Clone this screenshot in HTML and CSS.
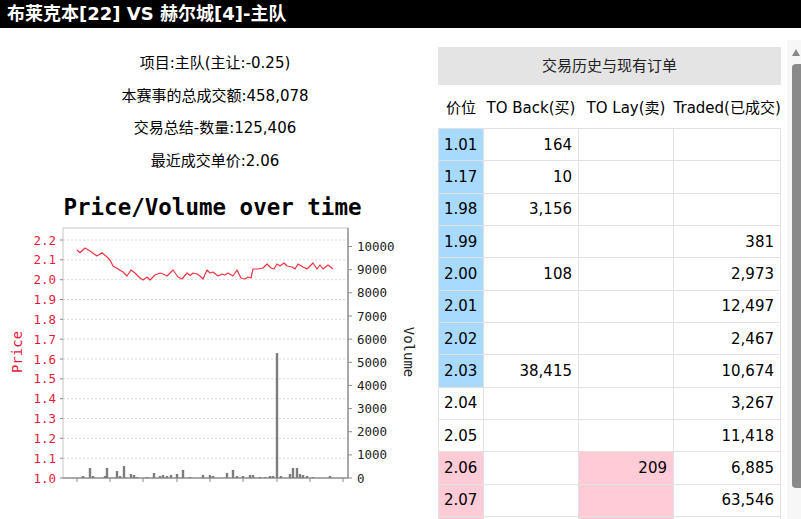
FILE: index.html
```html
<!DOCTYPE html>
<html lang="zh">
<head>
  <meta charset="UTF-8" />
  <title>布莱克本[22] VS 赫尔城[4]-主队</title>
  <link rel="stylesheet" href="styles.css">
</head>
<body>
  <div class="topbar">布莱克本[22] VS 赫尔城[4]-主队</div>
  <div class="main">
    <div class="summary">
      <p>项目:主队(主让:-0.25)</p>
      <p>本赛事的总成交额:458,078</p>
      <p>交易总结-数量:125,406</p>
      <p>最近成交单价:2.06</p>

      <svg class="chart" width="425" height="310" viewBox="0 185 425 310">
        <text class="chart-title" x="212.5" y="215" text-anchor="middle">Price/Volume over time</text>

        <!-- grid -->
        <g class="grid">
          <line x1="63" x2="348" y1="240" y2="240"/>
          <line x1="63" x2="348" y1="259.8" y2="259.8"/>
          <line x1="63" x2="348" y1="279.7" y2="279.7"/>
          <line x1="63" x2="348" y1="299.5" y2="299.5"/>
          <line x1="63" x2="348" y1="319.3" y2="319.3"/>
          <line x1="63" x2="348" y1="339.2" y2="339.2"/>
          <line x1="63" x2="348" y1="359" y2="359"/>
          <line x1="63" x2="348" y1="378.8" y2="378.8"/>
          <line x1="63" x2="348" y1="398.7" y2="398.7"/>
          <line x1="63" x2="348" y1="418.5" y2="418.5"/>
          <line x1="63" x2="348" y1="438.3" y2="438.3"/>
          <line x1="63" x2="348" y1="458.2" y2="458.2"/>
        </g>

        <!-- frame -->
        <line class="frame-light" x1="63" x2="348" y1="228" y2="228"/>
        <line class="frame-light" x1="63" x2="63" y1="228" y2="478"/>
        <line class="frame" x1="348" x2="348" y1="228" y2="478"/>
        <line class="frame" x1="63" x2="348" y1="478" y2="478"/>

        <!-- ticks -->
        <g class="ticks">
          <line x1="60" x2="63" y1="240" y2="240"/>
          <line x1="60" x2="63" y1="259.8" y2="259.8"/>
          <line x1="60" x2="63" y1="279.7" y2="279.7"/>
          <line x1="60" x2="63" y1="299.5" y2="299.5"/>
          <line x1="60" x2="63" y1="319.3" y2="319.3"/>
          <line x1="60" x2="63" y1="339.2" y2="339.2"/>
          <line x1="60" x2="63" y1="359" y2="359"/>
          <line x1="60" x2="63" y1="378.8" y2="378.8"/>
          <line x1="60" x2="63" y1="398.7" y2="398.7"/>
          <line x1="60" x2="63" y1="418.5" y2="418.5"/>
          <line x1="60" x2="63" y1="438.3" y2="438.3"/>
          <line x1="60" x2="63" y1="458.2" y2="458.2"/>
          <line x1="60" x2="63" y1="478" y2="478"/>

          <line x1="348" x2="352" y1="246.5" y2="246.5"/>
          <line x1="348" x2="352" y1="269.7" y2="269.7"/>
          <line x1="348" x2="352" y1="292.8" y2="292.8"/>
          <line x1="348" x2="352" y1="316" y2="316"/>
          <line x1="348" x2="352" y1="339.1" y2="339.1"/>
          <line x1="348" x2="352" y1="362.3" y2="362.3"/>
          <line x1="348" x2="352" y1="385.4" y2="385.4"/>
          <line x1="348" x2="352" y1="408.6" y2="408.6"/>
          <line x1="348" x2="352" y1="431.7" y2="431.7"/>
          <line x1="348" x2="352" y1="454.9" y2="454.9"/>
          <line x1="348" x2="352" y1="478" y2="478"/>

          <line x1="77" x2="77" y1="478" y2="482"/>
          <line x1="110" x2="110" y1="478" y2="482"/>
          <line x1="143" x2="143" y1="478" y2="482"/>
          <line x1="177" x2="177" y1="478" y2="482"/>
          <line x1="210" x2="210" y1="478" y2="482"/>
          <line x1="243" x2="243" y1="478" y2="482"/>
          <line x1="277" x2="277" y1="478" y2="482"/>
          <line x1="310" x2="310" y1="478" y2="482"/>
          <line x1="343" x2="343" y1="478" y2="482"/>
        </g>

        <!-- price axis -->
        <g class="price-labels" text-anchor="end">
          <text x="56" y="244.5">2.2</text>
          <text x="56" y="264.3">2.1</text>
          <text x="56" y="284.2">2.0</text>
          <text x="56" y="304">1.9</text>
          <text x="56" y="323.8">1.8</text>
          <text x="56" y="343.7">1.7</text>
          <text x="56" y="363.5">1.6</text>
          <text x="56" y="383.3">1.5</text>
          <text x="56" y="403.2">1.4</text>
          <text x="56" y="423">1.3</text>
          <text x="56" y="442.8">1.2</text>
          <text x="56" y="462.7">1.1</text>
          <text x="56" y="482.5">1.0</text>
        </g>
        <text class="axis-name price-name" transform="translate(22 352) rotate(-90)" text-anchor="middle">Price</text>

        <!-- volume axis -->
        <g class="volume-labels">
          <text x="357" y="251">10000</text>
          <text x="357" y="274.2">9000</text>
          <text x="357" y="297.3">8000</text>
          <text x="357" y="320.5">7000</text>
          <text x="357" y="343.6">6000</text>
          <text x="357" y="366.8">5000</text>
          <text x="357" y="389.9">4000</text>
          <text x="357" y="413.1">3000</text>
          <text x="357" y="436.2">2000</text>
          <text x="357" y="459.4">1000</text>
          <text x="357" y="482.5">0</text>
        </g>
        <text class="axis-name" transform="translate(404 352) rotate(90)" text-anchor="middle">Volume</text>

        <!-- volume bars -->
        <g class="bars">
          <rect x="81.8" y="476" width="2.4" height="2"/>
          <rect x="88.8" y="468" width="2.4" height="10"/>
          <rect x="91.8" y="476" width="2.4" height="2"/>
          <rect x="103.8" y="476" width="2.4" height="2"/>
          <rect x="105.8" y="468" width="2.4" height="10"/>
          <rect x="115.8" y="471" width="2.4" height="7"/>
          <rect x="118.8" y="476" width="2.4" height="2"/>
          <rect x="122.8" y="466" width="2.4" height="12"/>
          <rect x="129.8" y="474" width="2.4" height="4"/>
          <rect x="132.8" y="475" width="2.4" height="3"/>
          <rect x="135.8" y="477" width="2.4" height="1"/>
          <rect x="145.8" y="477" width="2.4" height="1"/>
          <rect x="152.8" y="473" width="2.4" height="5"/>
          <rect x="158.8" y="476" width="2.4" height="2"/>
          <rect x="161.8" y="475" width="2.4" height="3"/>
          <rect x="165.8" y="476" width="2.4" height="2"/>
          <rect x="169.8" y="475" width="2.4" height="3"/>
          <rect x="175.8" y="474" width="2.4" height="4"/>
          <rect x="181.8" y="470" width="2.4" height="8"/>
          <rect x="188.8" y="477" width="2.4" height="1"/>
          <rect x="201.8" y="475" width="2.4" height="3"/>
          <rect x="208.8" y="475" width="2.4" height="3"/>
          <rect x="211.8" y="476" width="2.4" height="2"/>
          <rect x="225.8" y="473" width="2.4" height="5"/>
          <rect x="231.8" y="470" width="2.4" height="8"/>
          <rect x="235.8" y="476" width="2.4" height="2"/>
          <rect x="241.8" y="476" width="2.4" height="2"/>
          <rect x="248.8" y="475" width="2.4" height="3"/>
          <rect x="251.8" y="475" width="2.4" height="3"/>
          <rect x="258.8" y="477" width="2.4" height="1"/>
          <rect x="263.8" y="477" width="2.4" height="1"/>
          <rect x="268.8" y="476" width="2.4" height="2"/>
          <rect x="271.8" y="476" width="2.4" height="2"/>
          <rect x="275.8" y="353" width="2.4" height="125"/>
          <rect x="279.8" y="476" width="2.4" height="2"/>
          <rect x="288.8" y="474" width="2.4" height="4"/>
          <rect x="291.8" y="468" width="2.4" height="10"/>
          <rect x="295.8" y="468" width="2.4" height="10"/>
          <rect x="298.8" y="474" width="2.4" height="4"/>
          <rect x="301.8" y="475" width="2.4" height="3"/>
          <rect x="305.8" y="476" width="2.4" height="2"/>
          <rect x="311.8" y="477" width="2.4" height="1"/>
          <rect x="328.8" y="476" width="2.4" height="2"/>
        </g>

        <!-- price line -->
        <polyline class="price-line" points="77,250 80,252.7 85,248 90,251 97,256 102,252.7 107,257 110,260 113,266 118,269 123,272 127,276 131,270 135,273 140,278 143,280 147,277 150,280 155,275 160,273 163,274 167,276 173,270 178,277 182,279 187,273 190,275.5 193,273 197,274 200,276 203,279 207,270 210,273 213,272 218,276 222,274 225,275 228,273 233,276 237,270 241,278 245,279 248,277 251,278 253,269 258,269 263,268 267,264 271,268 274,269 277,264 280,266 284,263 287,266 292,267 295,269 298,264 303,267 307,269 310,266 313,263 317,269 320,265 323,269 328,265 333,269"/>
      </svg>
    </div>

    <div class="book">
      <div class="book-body">
        <div class="book-title">交易历史与现有订单</div>
        <table class="orders">
          <thead>
            <tr>
              <th class="col-price">价位</th>
              <th class="col-back">TO Back(买)</th>
              <th class="col-lay">TO Lay(卖)</th>
              <th class="col-traded">Traded(已成交)</th>
            </tr>
          </thead>
          <tbody>
            <tr><td class="price back">1.01</td><td class="num">164</td><td class="num"></td><td class="num"></td></tr>
            <tr><td class="price back">1.17</td><td class="num">10</td><td class="num"></td><td class="num"></td></tr>
            <tr><td class="price back">1.98</td><td class="num">3,156</td><td class="num"></td><td class="num"></td></tr>
            <tr><td class="price back">1.99</td><td class="num"></td><td class="num"></td><td class="num">381</td></tr>
            <tr><td class="price back">2.00</td><td class="num">108</td><td class="num"></td><td class="num">2,973</td></tr>
            <tr><td class="price back">2.01</td><td class="num"></td><td class="num"></td><td class="num">12,497</td></tr>
            <tr><td class="price back">2.02</td><td class="num"></td><td class="num"></td><td class="num">2,467</td></tr>
            <tr><td class="price back">2.03</td><td class="num">38,415</td><td class="num"></td><td class="num">10,674</td></tr>
            <tr><td class="price">2.04</td><td class="num"></td><td class="num"></td><td class="num">3,267</td></tr>
            <tr><td class="price">2.05</td><td class="num"></td><td class="num"></td><td class="num">11,418</td></tr>
            <tr><td class="price lay">2.06</td><td class="num"></td><td class="num lay">209</td><td class="num">6,885</td></tr>
            <tr><td class="price lay">2.07</td><td class="num"></td><td class="num lay"></td><td class="num">63,546</td></tr>
            <tr><td class="price lay"></td><td class="num"></td><td class="num lay"></td><td class="num"></td></tr>
          </tbody>
        </table>
      </div>
      <div class="scrollbar">
        <span class="scroll-arrow"></span>
        <span class="scroll-thumb"></span>
      </div>
    </div>
  </div>
</body>
</html>
```

FILE: styles.css
```css
html, body {
  overflow: hidden;
}
body {
  margin: 0;
  font-family: "DejaVu Sans", "Noto Sans CJK SC", sans-serif;
  font-size: 15px;
  color: #000;
  background: #fff;
}
.topbar {
  height: 28px;
  line-height: 28px;
  padding-left: 7px;
  background: #000;
  color: #fff;
  font-size: 18px;
  font-weight: bold;
  white-space: nowrap;
}
.main {
  display: grid;
  grid-template-columns: 430px 1fr;
  align-items: start;
}

/* left side */
.summary {
  padding-top: 19px;
  text-align: center;
}
.summary p {
  margin: 0;
  line-height: 32.5px;
}
.chart {
  display: block;
  margin-top: 8px;
  font-family: "DejaVu Sans Mono", monospace;
}
.chart-title {
  font-size: 22.5px;
  font-weight: bold;
  fill: #000;
}
.grid line {
  stroke: #d8d8d8;
  stroke-width: 1;
  stroke-dasharray: 2 2;
}
.frame-light {
  stroke: #c4c4c4;
  stroke-width: 1;
}
.frame {
  stroke: #8c8c8c;
  stroke-width: 1.5;
}
.ticks line {
  stroke: #8c8c8c;
  stroke-width: 1;
}
.price-labels text {
  font-size: 12.5px;
  fill: #e8193c;
}
.volume-labels text {
  font-size: 12.5px;
  fill: #222;
}
.axis-name {
  font-size: 14px;
  fill: #222;
}
.price-name {
  fill: #e8193c;
}
.bars rect {
  fill: #7d7d7d;
}
.price-line {
  fill: none;
  stroke: #ee3344;
  stroke-width: 1.2;
  stroke-linejoin: round;
}

/* right side: order book */
.book {
  margin-top: 12px;
  height: 479px;
  display: flex;
  overflow: hidden;
}
.book-body {
  flex: 1;
  padding: 7px 6px 0 8px;
}
.scrollbar {
  width: 14px;
  padding-left: 5px;
  box-sizing: border-box;
  background: #f7f7f7;
  display: flex;
  flex-direction: column;
}
.scroll-arrow {
  width: 0;
  height: 0;
  margin-top: 9px;
  border-left: 4.5px solid transparent;
  border-right: 4.5px solid transparent;
  border-bottom: 7px solid #8a8a8a;
}
.scroll-thumb {
  margin-top: 8px;
  width: 9px;
  height: 424px;
  background: #8a8a8a;
  border-radius: 4px 0 0 4px;
}
.book-title {
  height: 38px;
  line-height: 38px;
  text-align: center;
  background: #e4e4e4;
  color: #222;
}
.orders {
  width: 100%;
  border-collapse: collapse;
  table-layout: fixed;
}
.orders th {
  height: 43px;
  padding: 0;
  font-weight: normal;
  text-align: center;
  white-space: nowrap;
}
.col-price { width: 45px; }
.col-back { width: 95px; }
.col-lay { width: 95px; }
.orders td {
  height: 32.33px;
  padding: 0 5px;
  border: 1px solid #e2e2e2;
  box-sizing: border-box;
}
.orders td.num {
  text-align: right;
  padding-right: 6px;
}
.orders td.back {
  background: #a8d9ff;
}
.orders td.lay {
  background: #ffcbd6;
}
```
